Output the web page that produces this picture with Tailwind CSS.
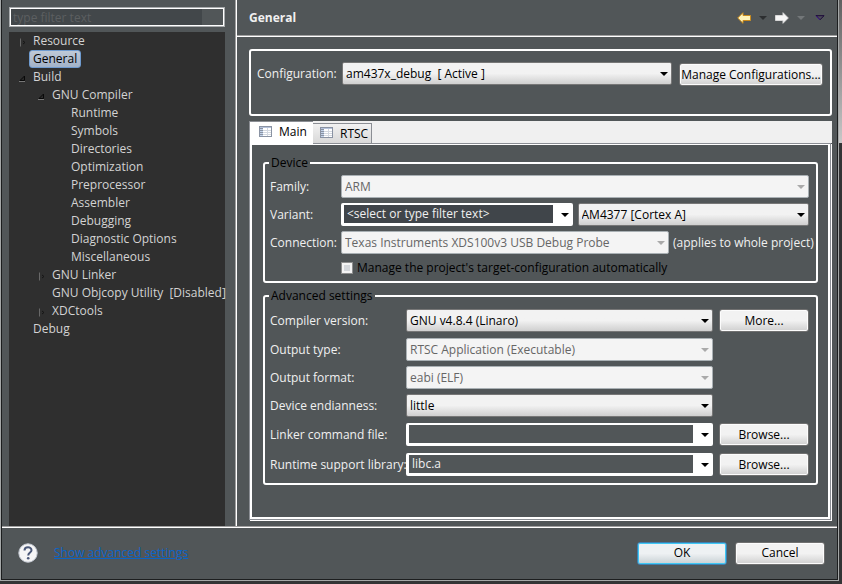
<!DOCTYPE html>
<html lang="en">
<head>
  <meta charset="UTF-8">
  <meta name="viewport" content="width=device-width, initial-scale=1.0">
  <title>Properties - General</title>
  <script src="https://cdn.jsdelivr.net/npm/@tailwindcss/browser@4"></script>
</head>
<body class="min-h-screen flex bg-[#333435] font-['Open_Sans','Noto_Sans',sans-serif] text-[12px] leading-[18px] text-[#f0f0f0]">
  <!-- Shared icons -->
  <svg class="hidden">
    <symbol id="caret" viewBox="0 0 8 4"><path d="M0 0h8L4 4z" fill="currentColor"/></symbol>
    <symbol id="sheet" viewBox="0 0 13 11">
      <path d="M0 0h13v11H0z" fill="#8a93a3"/>
      <path d="M1 1h11v1H1z" fill="#b6c3dc"/>
      <path d="M1 3h3v1H1zM1 5h3v1H1zM1 7h3v1H1zM1 9h3v1H1z" fill="#c3d3ea"/>
      <path d="M4 2h8v8H4z" fill="#fff"/>
      <path d="M4 4h8v1H4zM4 6h8v1H4zM4 8h8v1H4zM8 2h1v8H8z" fill="#d3d8e0"/>
    </symbol>
    <symbol id="closed" viewBox="0 0 6 9"><path d="M.5 .5v8" stroke="#686868" fill="none"/><path d="M3 3l2 1.500L3 6" stroke="#151515" fill="none"/></symbol>
    <symbol id="open" viewBox="0 0 7 7"><path d="M5.500 1v4.500H1z" fill="#2a2a2a" stroke="#080808"/><path d="M0 6.500h6" stroke="#777"/></symbol>
  </svg>

  <div class="flex-1 min-w-0 flex border-x border-[#a5a8a8] mb-[3px]">
    <div class="flex-1 min-w-0 flex flex-col bg-[#515658] border-x border-b border-[#1c1e1f] shadow-[0_1px_0_#a5a8a8] mb-px">
      <div class="flex-1 flex">

        <!-- Tree -->
        <aside class="w-[235px] shrink-0 flex flex-col pl-[7px] pr-[11px] pt-[7px] border-r border-white shadow-[inset_-1px_0_#a0a0a0]">
          <input type="text" aria-label="Filter" placeholder="type filter text" class="h-[20px] w-full px-[3px] border border-[#a8abad] outline-1 -outline-offset-2 outline-white bg-[linear-gradient(to_right,#42474a_192px,#515658_192px)] placeholder:text-[#5c5f61]">
          <ul class="flex-1 mt-[5px] bg-[#2f2f2f] text-[#d3d3d3]">
            <li class="flex items-center h-[18px]"><svg class="w-[6px] h-[9px] ml-[11px] mr-[7px] mt-[2px]"><use href="#closed"/></svg>Resource</li>
            <li class="flex items-center h-[18px] pl-[20px]"><span class="px-[3px] h-[18px] leading-[16px] rounded-[3px] border border-[#6f9bd0] bg-linear-to-b from-[#bfc9d6] to-[#a3b3c9] text-black">General</span></li>
            <li class="flex items-center h-[18px]"><svg class="w-[7px] h-[7px] ml-[10px] mr-[7px] mt-[2px]"><use href="#open"/></svg>Build</li>
            <li class="flex items-center h-[18px]"><svg class="w-[7px] h-[7px] ml-[29px] mr-[7px] mt-[2px]"><use href="#open"/></svg>GNU Compiler</li>
            <li class="h-[18px] pl-[62px]">Runtime</li>
            <li class="h-[18px] pl-[62px]">Symbols</li>
            <li class="h-[18px] pl-[62px]">Directories</li>
            <li class="h-[18px] pl-[62px]">Optimization</li>
            <li class="h-[18px] pl-[62px]">Preprocessor</li>
            <li class="h-[18px] pl-[62px]">Assembler</li>
            <li class="h-[18px] pl-[62px]">Debugging</li>
            <li class="h-[18px] pl-[62px]">Diagnostic Options</li>
            <li class="h-[18px] pl-[62px]">Miscellaneous</li>
            <li class="flex items-center h-[18px]"><svg class="w-[6px] h-[9px] ml-[30px] mr-[7px] mt-[2px]"><use href="#closed"/></svg>GNU Linker</li>
            <li class="h-[18px] pl-[43px] whitespace-nowrap">GNU Objcopy Utility&nbsp; [Disabled]</li>
            <li class="flex items-center h-[18px]"><svg class="w-[6px] h-[9px] ml-[30px] mr-[7px] mt-[2px]"><use href="#closed"/></svg>XDCtools</li>
            <li class="h-[18px] pl-[24px]">Debug</li>
          </ul>
        </aside>

        <main class="flex-1 min-w-0 flex flex-col">
          <!-- Page title and history arrows -->
          <header class="h-[37px] flex items-center pl-[12px] pr-[12px] border-b border-white shadow-[inset_0_-1px_#a0a0a0]">
            <h1 class="flex-1 font-bold text-[12px]">General</h1>
            <div class="flex items-center gap-[8px]">
              <button aria-label="Back"><svg class="w-[14px] h-[12px]" viewBox="0 0 14 12"><path d="M.7 6L6 .7V3.500h7.500v5H6v2.800z" fill="#fff3b8" stroke="#c98a1c"/></svg></button>
              <button aria-label="Back history" class="text-[#2c2e30]"><svg class="w-[8px] h-[4px]"><use href="#caret"/></svg></button>
              <button aria-label="Forward"><svg class="w-[14px] h-[12px]" viewBox="0 0 14 12"><path d="M13.300 6L8 .7V3.500H.5v5H8v2.800z" fill="#f6f6f6" stroke="#d6d6d6"/></svg></button>
              <button aria-label="Forward history" class="text-[#737779]"><svg class="w-[8px] h-[4px]"><use href="#caret"/></svg></button>
              <button aria-label="Menu" class="ml-[2px]"><svg class="w-[10px] h-[6px]" viewBox="0 0 10 6"><path d="M1 .7h8L5 4.800z" fill="#4c4a58" stroke="#1b0838"/><path d="M1 1l4 4" stroke="#3a1480"/></svg></button>
            </div>
          </header>

          <div class="flex-1 flex flex-col pl-[12px] pr-[5px] pt-[12px] pb-[5px]">
            <!-- Configuration -->
            <section class="h-[67px] flex items-start gap-[7px] pl-[6px] pr-[7px] pt-[11px] border-2 border-white rounded-[3px]">
              <label for="configuration" class="w-[78px] pt-[3px]">Configuration:</label>
              <div class="relative flex-1 flex">
                <select id="configuration" class="appearance-none flex-1 h-[23px] px-[3px] border border-[#777] rounded-[2px] bg-linear-to-b from-[#f2f2f2] from-50% to-[#cfcfcf] text-black">
                  <option>am437x_debug&nbsp; [ Active ]</option>
                </select>
                <svg class="absolute right-[4px] top-[10px] w-[8px] h-[4px] text-black pointer-events-none"><use href="#caret"/></svg>
              </div>
              <button class="w-[144px] h-[23px] mt-px border border-[#707070] rounded-[3px] bg-linear-to-b from-[#f2f2f2] from-50% to-[#cfcfcf] inset-ring inset-ring-[#fcfcfc] text-black whitespace-nowrap">Manage Configurations...</button>
            </section>

            <!-- Tabs -->
            <div role="tablist" class="mt-[5px] h-[22px] flex items-end bg-[#f0f0f0] text-black">
              <button role="tab" aria-selected="true" class="relative z-10 -mb-px h-[23px] w-[64px] flex items-center gap-[7px] pl-[9px] pb-[2px] border-t border-l border-[#8b8e94] bg-white"><svg class="w-[13px] h-[11px] mb-[2px]"><use href="#sheet"/></svg>Main</button>
              <button role="tab" class="h-[20px] w-[59px] flex items-center gap-[7px] pl-[7px] border border-b-0 border-l-0 border-[#8b8e94] bg-linear-to-b from-[#f2f2f2] to-[#d8d8d8]"><svg class="w-[13px] h-[11px] mb-[2px]"><use href="#sheet"/></svg>RTSC</button>
            </div>
            <div role="tabpanel" class="flex-1 mr-px mb-px pl-[13px] pr-[12px] pt-[18px] border border-[#8b8e94] shadow-[1px_1px_0_#fff,inset_2px_0_#fff,inset_-2px_0_#fff,inset_0_1px_#fff,inset_0_-2px_#fff]">

              <fieldset class="relative pl-[5px] pr-[7px] pt-[11px] pb-[4px] border-2 border-white rounded-[3px]">
                <legend class="absolute left-[4px] top-[-10px] px-[2px] bg-[#515658] text-black">Device</legend>
                <div class="grid grid-cols-[71px_1fr] gap-y-[5px]">
                  <label for="family" class="pt-[3px]">Family:</label>
                  <div class="relative flex">
                    <select id="family" disabled class="appearance-none flex-1 h-[23px] px-[3px] border border-[#a9b0b4] rounded-[2px] bg-[#f4f4f4] text-[#666] opacity-100"><option>ARM</option></select>
                    <svg class="absolute right-[4px] top-[10px] w-[8px] h-[4px] text-[#aaa]"><use href="#caret"/></svg>
                  </div>
                  <label for="variant" class="pt-[3px]">Variant:</label>
                  <div class="flex gap-[5px]">
                    <div class="relative flex flex-1 h-[23px]">
                      <input id="variant" type="text" value="&lt;select or type filter text&gt;" class="flex-1 min-w-0 border-[3px] border-t-2 border-r-[20px] border-white rounded-[2px] px-[3px] bg-[#40454a]">
                      <svg class="absolute right-[4px] top-[10px] w-[8px] h-[4px] text-black"><use href="#caret"/></svg>
                    </div>
                    <div class="relative flex flex-1">
                      <select aria-label="Device" class="appearance-none flex-1 h-[23px] px-[3px] border border-[#777] rounded-[2px] bg-linear-to-b from-[#f2f2f2] from-50% to-[#cfcfcf] text-black"><option>AM4377 [Cortex A]</option></select>
                      <svg class="absolute right-[4px] top-[10px] w-[8px] h-[4px] text-black pointer-events-none"><use href="#caret"/></svg>
                    </div>
                  </div>
                  <label for="connection" class="pt-[3px]">Connection:</label>
                  <div class="flex gap-[4px]">
                    <div class="relative flex flex-1">
                      <select id="connection" disabled class="appearance-none flex-1 h-[23px] px-[3px] border border-[#a9b0b4] rounded-[2px] bg-[#f4f4f4] text-[#666] opacity-100"><option>Texas Instruments XDS100v3 USB Debug Probe</option></select>
                      <svg class="absolute right-[4px] top-[10px] w-[8px] h-[4px] text-[#aaa]"><use href="#caret"/></svg>
                    </div>
                    <span class="w-[136px] pt-[3px] whitespace-nowrap">(applies to whole project)</span>
                  </div>
                  <label class="col-start-2 h-[18px] flex items-center gap-[4px] text-black"><input type="checkbox" class="appearance-none w-[12px] h-[12px] border border-[#8e8f8f] bg-[#d4d7db] inset-ring-2 inset-ring-[#f4f4f4]">Manage the project's target-configuration automatically</label>
                </div>
              </fieldset>

              <fieldset class="relative mt-[12px] pl-[5px] pr-[7px] pt-[12px] pb-[7px] border-2 border-white rounded-[3px]">
                <legend class="absolute left-[4px] top-[-10px] px-[2px] bg-[#515658] text-black">Advanced settings</legend>
                <div class="grid grid-cols-[130px_1fr_90px] grid-rows-[24px_23px_23px_24px_25px_23px] items-start gap-x-[6px] gap-y-[5px]">
                  <label for="compiler" class="pt-[3px]">Compiler version:</label>
                  <div class="relative flex">
                    <select id="compiler" class="appearance-none flex-1 h-[23px] px-[3px] border border-[#777] rounded-[2px] bg-linear-to-b from-[#f2f2f2] from-50% to-[#cfcfcf] text-black"><option>GNU v4.8.4 (Linaro)</option></select>
                    <svg class="absolute right-[4px] top-[10px] w-[8px] h-[4px] text-black pointer-events-none"><use href="#caret"/></svg>
                  </div>
                  <button class="h-[23px] border border-[#707070] rounded-[3px] bg-linear-to-b from-[#f2f2f2] from-50% to-[#cfcfcf] inset-ring inset-ring-[#fcfcfc] text-black">More...</button>

                  <label for="outtype" class="pt-[3px]">Output type:</label>
                  <div class="relative flex">
                    <select id="outtype" disabled class="appearance-none flex-1 h-[23px] px-[3px] border border-[#a9b0b4] rounded-[2px] bg-[#f4f4f4] text-[#666] opacity-100"><option>RTSC Application (Executable)</option></select>
                    <svg class="absolute right-[4px] top-[10px] w-[8px] h-[4px] text-[#aaa]"><use href="#caret"/></svg>
                  </div>

                  <label for="outformat" class="col-start-1 pt-[3px]">Output format:</label>
                  <div class="relative flex">
                    <select id="outformat" disabled class="appearance-none flex-1 h-[23px] px-[3px] border border-[#a9b0b4] rounded-[2px] bg-[#f4f4f4] text-[#666] opacity-100"><option>eabi (ELF)</option></select>
                    <svg class="absolute right-[4px] top-[10px] w-[8px] h-[4px] text-[#aaa]"><use href="#caret"/></svg>
                  </div>

                  <label for="endian" class="col-start-1 pt-[3px]">Device endianness:</label>
                  <div class="relative flex">
                    <select id="endian" class="appearance-none flex-1 h-[23px] px-[3px] border border-[#777] rounded-[2px] bg-linear-to-b from-[#f2f2f2] from-50% to-[#cfcfcf] text-black"><option>little</option></select>
                    <svg class="absolute right-[4px] top-[10px] w-[8px] h-[4px] text-black pointer-events-none"><use href="#caret"/></svg>
                  </div>

                  <label for="linkerfile" class="col-start-1 pt-[3px]">Linker command file:</label>
                  <div class="relative flex h-[23px]">
                    <input id="linkerfile" type="text" class="flex-1 min-w-0 border-[3px] border-t-2 border-r-[20px] border-white rounded-[2px] px-[3px] bg-[#515658]">
                    <svg class="absolute right-[4px] top-[10px] w-[8px] h-[4px] text-black"><use href="#caret"/></svg>
                  </div>
                  <button class="h-[23px] border border-[#707070] rounded-[3px] bg-linear-to-b from-[#f2f2f2] from-50% to-[#cfcfcf] inset-ring inset-ring-[#fcfcfc] text-black">Browse...</button>

                  <label for="rtslib" class="pt-[3px] whitespace-nowrap">Runtime support library:</label>
                  <div class="relative flex h-[23px]">
                    <input id="rtslib" type="text" value="libc.a" class="flex-1 min-w-0 border-[3px] border-t-2 border-r-[20px] border-white rounded-[2px] px-[3px] bg-[#515658]">
                    <svg class="absolute right-[4px] top-[10px] w-[8px] h-[4px] text-black"><use href="#caret"/></svg>
                  </div>
                  <button class="h-[23px] border border-[#707070] rounded-[3px] bg-linear-to-b from-[#f2f2f2] from-50% to-[#cfcfcf] inset-ring inset-ring-[#fcfcfc] text-black">Browse...</button>
                </div>
              </fieldset>
            </div>
          </div>
        </main>
      </div>

      <!-- Bottom bar -->
      <footer class="h-[53px] flex items-center pl-[16px] pr-[12px] border-t border-[#a0a0a0] shadow-[inset_0_1px_#fff]">
        <button aria-label="Help">
          <svg class="w-[20px] h-[20px]" viewBox="0 0 20 20">
            <circle cx="10" cy="10" r="9.200" fill="#f6f6f6" stroke="#c5cad4"/>
            <path d="M6.500 7.500C6.500 3.200 13.500 3.200 13.500 7.200C13.500 9.600 10.200 9.400 10.200 12.600" fill="none" stroke="#4b5878" stroke-width="2"/>
            <circle cx="10.200" cy="15.300" r="1.300" fill="#4b5878"/>
          </svg>
        </button>
        <a href="#" class="ml-[16px] text-[#0a64c8] underline">Show advanced settings</a>
        <div class="ml-auto flex gap-[8px]">
          <button class="w-[90px] h-[23px] border border-[#3c7fb1] rounded-[3px] bg-linear-to-b from-[#eef1f3] from-50% to-[#c8d0d4] inset-ring inset-ring-[#3fc8f4] text-black">OK</button>
          <button class="w-[90px] h-[23px] border border-[#707070] rounded-[3px] bg-linear-to-b from-[#f2f2f2] from-50% to-[#cfcfcf] inset-ring inset-ring-[#fcfcfc] text-black">Cancel</button>
        </div>
      </footer>
    </div>
  </div>
  <div class="w-[3px] bg-[linear-gradient(to_bottom,#606060,#c8c8c8_143px,#333435_143px)]"></div>
</body>
</html>
